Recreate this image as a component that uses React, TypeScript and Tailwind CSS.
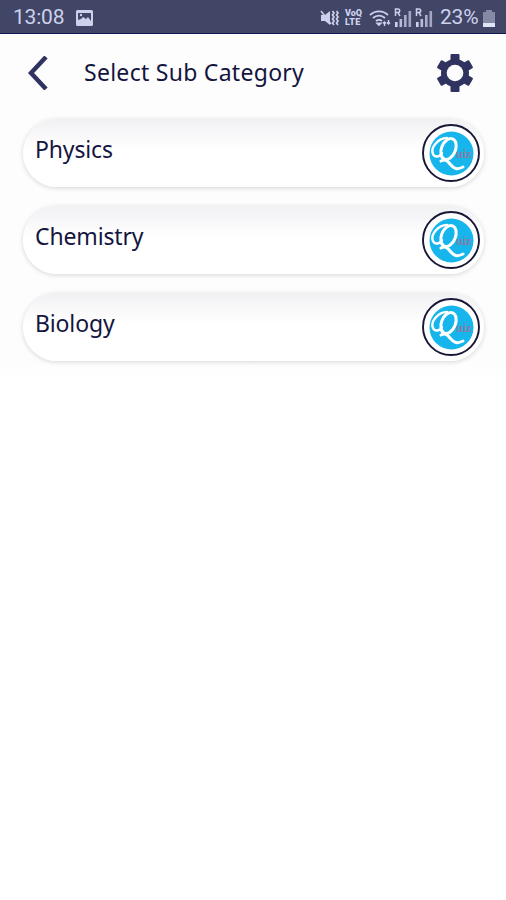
import { ReactNode } from "react";

const categories = ["Physics", "Chemistry", "Biology"];

function Label({ children, className }: { children: ReactNode; className: string }) {
  return (
    <span className={`block whitespace-nowrap text-[23px] leading-7 text-[#14153f] ${className}`}>
      {children}
    </span>
  );
}

function SignalIcon() {
  return (
    <svg viewBox="0 0 19 20" className="h-5 w-[19px]" fill="#ccd2ec">
      <path d="M1.500 8V1h2.400a1.800 1.800 0 0 1 0 3.600H1.500M3.900 4.600 6 8" fill="none" stroke="#ccd2ec" strokeWidth="1.5" />
      <rect x="1" y="14" width="2.6" height="5" />
      <rect x="5.5" y="11" width="2.6" height="8" opacity=".85" />
      <rect x="10" y="7" width="2.6" height="12" opacity=".75" />
      <rect x="14.5" y="3" width="2.6" height="16" opacity=".7" />
    </svg>
  );
}

function StatusBar() {
  return (
    <div className="flex h-[34px] items-center border-b border-[#10154f] bg-[#414566] pl-[13px] pt-[3px] font-['Roboto',sans-serif] text-[21px] text-[#ccd2ec]">
      <span className="w-[63px] tracking-[-0.2px]">13:08</span>
      <svg viewBox="0 0 17 16" className="h-4 w-[17px]">
        <rect width="17" height="16" rx="1.5" fill="#ccd2ec" />
        <path d="M2 3h13v8l-3-4-2 2-3-2-2 2-3 1Z" fill="#414566" />
        <circle cx="5" cy="5" r="1.2" fill="#ccd2ec" />
      </svg>
      <div className="ml-[227px] flex items-center">
        <svg viewBox="0 0 20 18" className="h-[18px] w-5" fill="#ccd2ec">
          <path d="M1 6h4l5-4v14l-5-4H1Z" />
          <path d="m1 2 10 13" fill="none" stroke="#ccd2ec" strokeWidth="1.5" />
          <path d="m12.500 2 1.500 2-1.500 2 1.500 2-1.500 2 1.500 2-1.500 2 1.500 2M16.500 2l1.500 2-1.500 2 1.500 2-1.500 2 1.500 2-1.500 2 1.500 2" fill="none" stroke="#ccd2ec" strokeWidth="1.700" />
        </svg>
        <div className="ml-[5px] w-[24px] text-[9px] font-black leading-[9px]">
          <div>VoQ</div>
          <div className="tracking-[0.3px]">LTE</div>
        </div>
        <svg viewBox="0 0 24 18" className="h-[18px] w-6" fill="none" stroke="#ccd2ec" strokeWidth="1.8">
          <path d="M1 6a13 13 0 0 1 18 0M4 9a9 9 0 0 1 12 0M7 12a5 5 0 0 1 6 0" />
          <path d="m8.500 14.500 1.500 1.500 1.500-1.500Z" fill="#ccd2ec" />
          <path d="M15.500 17v-4m-1.500 1.500 1.500-1.500 1.500 1.500M19.500 11v4m-1.500-1.500 1.500 1.500 1.500-1.500" strokeWidth="1.400" />
        </svg>
        <div className="ml-px flex gap-[2px]">
          <SignalIcon />
          <SignalIcon />
        </div>
        <span className="ml-[6px] w-[43px] tracking-[-0.2px]">23%</span>
        <svg viewBox="0 0 12 17" className="h-[17px] w-3">
          <path d="M3 0h6v2h3v15H0V2h3Z" fill="#858aa6" />
          <path d="M0 13h12v4H0Z" fill="#e0e4f7" />
        </svg>
      </div>
    </div>
  );
}

function GearIcon() {
  return (
    <svg viewBox="0 0 38 38" className="h-[38px] w-[38px]" fill="#303360">
      <rect x="14.5" width="9" height="38" rx="1" />
      <rect x="14.5" y="0.5" width="9" height="37" rx="1" transform="rotate(60 19 19)" />
      <rect x="14.5" y="0.5" width="9" height="37" rx="1" transform="rotate(120 19 19)" />
      <circle cx="19" cy="19" r="14" />
      <circle cx="19" cy="19" r="8.3" fill="#fdfdfd" />
    </svg>
  );
}

// Round badge: script Q with a long swash over a blue disc
function Logo() {
  return (
    <svg viewBox="0 0 60 60" className="mr-[3px] h-[60px] w-[60px]">
      <circle cx="30" cy="30" r="28" fill="#fff" stroke="#171738" strokeWidth="1.9" />
      <circle cx="30.5" cy="30.5" r="22" fill="#16b6ec" />
      <g fill="none" stroke="#fff" strokeLinecap="round">
        <ellipse cx="27.5" cy="26" rx="7" ry="11" strokeWidth="3" transform="rotate(22 27.5 26)" />
        <path d="M26 15C17 15 9 25 12 31c2 4 7 3 9-1" strokeWidth="2.4" />
        <path d="M20 38c4-2 6-1 9 3 4 5 7 6 13 3" strokeWidth="3" />
      </g>
      <text x="35" y="35" className="font-['Liberation_Serif',serif] text-[12px] font-bold" fill="#827fa8">
        uiz
      </text>
    </svg>
  );
}

function CategoryCard({ name }: { name: string }) {
  return (
    <button className="flex h-[68px] w-full items-center justify-between rounded-full bg-linear-to-b from-[#f1f1f4] to-white to-45% pl-3 text-left shadow-[0_1px_5px_rgba(0,0,0,0.16)]">
      <span className="-mt-[9px]">
        <Label className="tracking-[-0.15px]">{name}</Label>
      </span>
      <Logo />
    </button>
  );
}

export default function App() {
  return (
    <div className="h-[900px] w-[506px] overflow-hidden bg-linear-to-b from-[#fdfdfd] from-40% to-white to-42% font-['Noto_Sans',sans-serif]">
      <StatusBar />
      <header className="flex h-[78px] items-center pl-7 pr-8">
        <svg viewBox="0 0 20 34" className="h-[34px] w-5" fill="none" stroke="#303360" strokeWidth="4.500">
          <path d="M18 1 3 17l15 16" />
        </svg>
        <h1 className="-mt-[3px] ml-9 flex-1">
          <Label className="tracking-[0.28px]">Select Sub Category</Label>
        </h1>
        <GearIcon />
      </header>
      <main className="flex flex-col gap-[19px] pl-[23px] pr-[22px] pt-[7px]">
        {categories.map((name) => (
          <CategoryCard key={name} name={name} />
        ))}
      </main>
    </div>
  );
}
